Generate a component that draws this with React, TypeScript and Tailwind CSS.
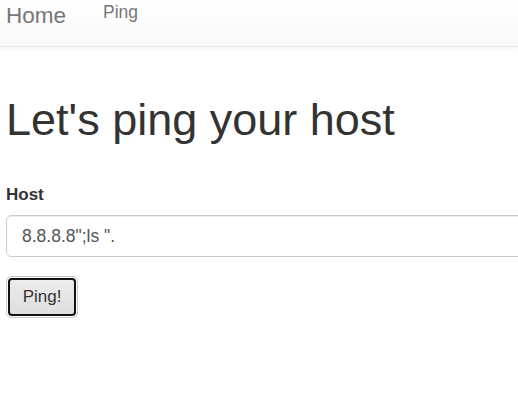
export default function App() {
  return (
    <div className="w-[518px] h-[407px] overflow-hidden bg-white" style={{ fontFamily: '"Liberation Sans", Arial, sans-serif' }}>
      <div className="h-[47px] border-b border-[#e7e7e7] bg-gradient-to-b from-white to-[#f8f8f8] shadow-[0_1px_5px_rgba(0,0,0,0.06)] flex items-start">
        <span className="ml-[6px] mt-[3.5px] text-[22.5px] leading-[24px] text-[#777]">Home</span>
        <span className="ml-[37px] mt-[2px] text-[17.5px] leading-[20px] text-[#777]">Ping</span>
      </div>
      <div className="pl-[6px]">
        <h1 className="mt-[48px] text-[45px] leading-[50px] text-[#333]">Let's ping your host</h1>
        <label className="block mt-[40px] text-[17px] leading-[20px] font-bold text-[#333]">Host</label>
        <div className="mt-[10px] w-[600px] h-[42px] border border-[#ccc] rounded-[5px] shadow-[inset_0_1px_1px_rgba(0,0,0,0.075)] flex items-center pl-[15px] text-[17.5px] leading-[20px] text-[#555] whitespace-pre">
          {'8.8.8.8";ls ".'}
        </div>
        <div className="mt-[19px] w-[72px] h-[42px] border border-[#c8c8c8] rounded-[5px] p-[1px]">
          <div className="w-full h-full border-2 border-[#111] rounded-[4px] bg-gradient-to-b from-[#ececec] to-[#dedede] flex items-center justify-center text-[17px] leading-[20px] text-[#333]">
            Ping!
          </div>
        </div>
      </div>
    </div>
  );
}
